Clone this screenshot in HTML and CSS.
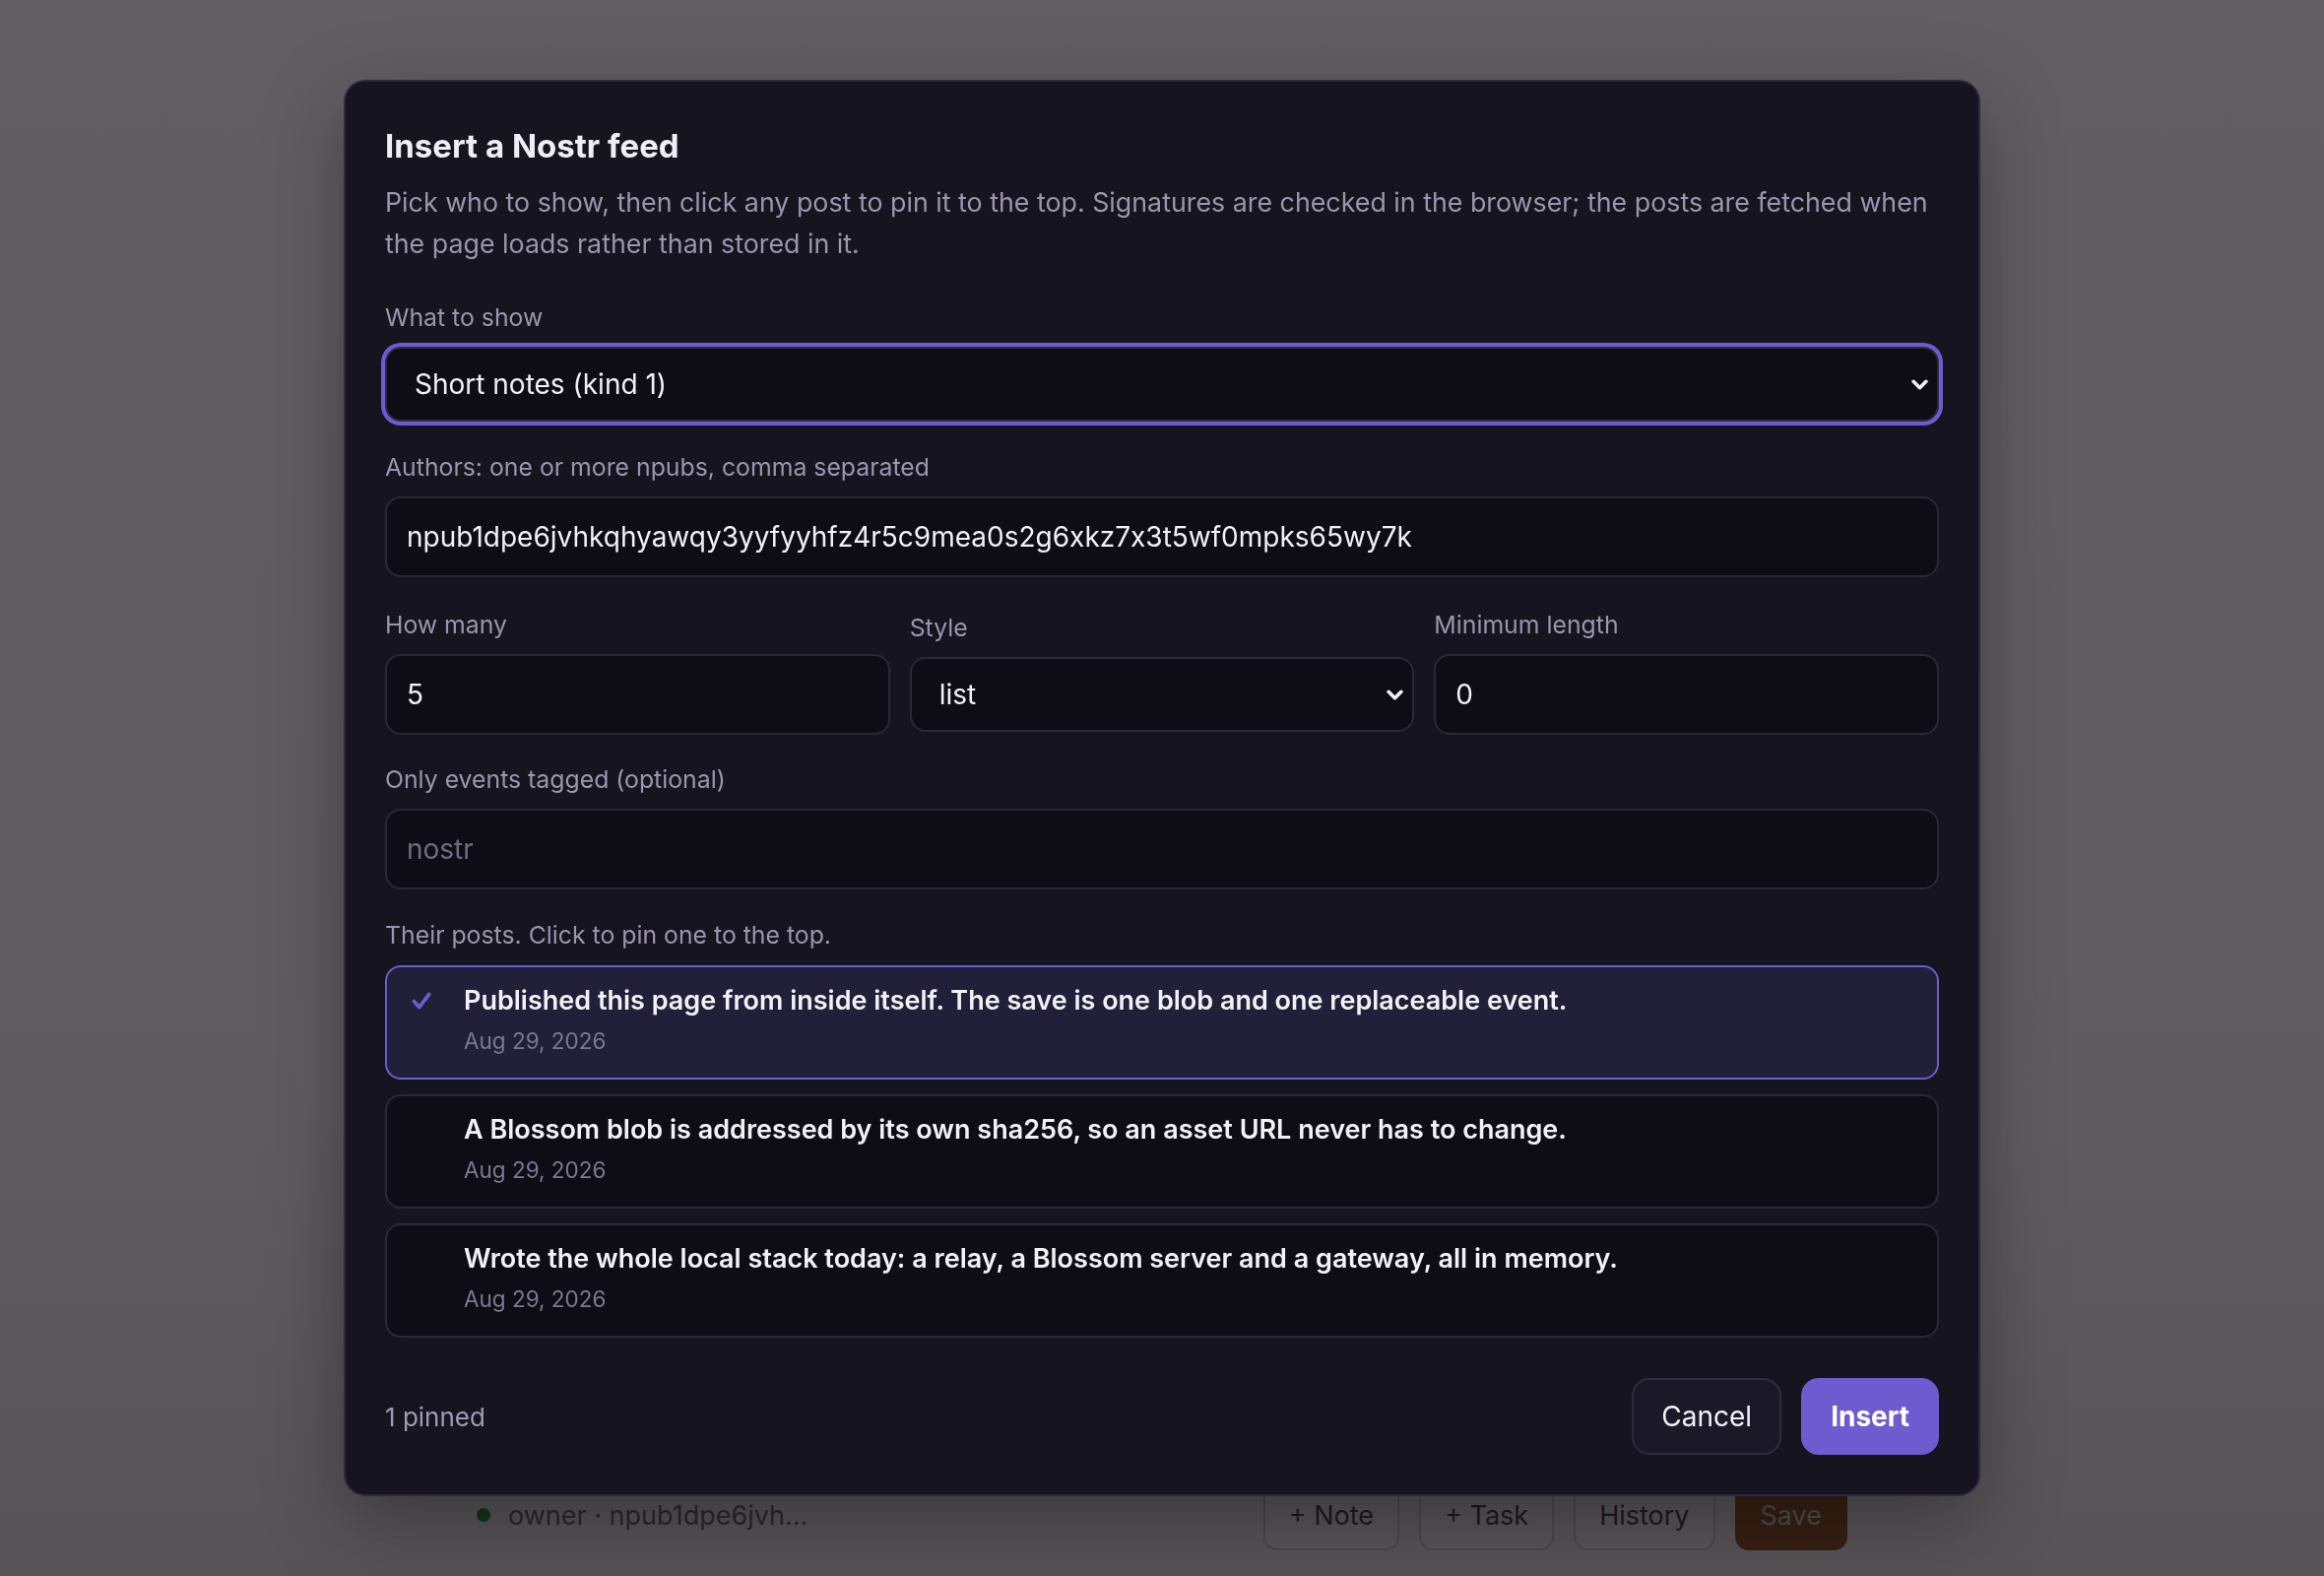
FILE: index.html
```html
<!DOCTYPE html>
<html lang="en">
<head>
    <meta charset="UTF-8">
    <meta name="viewport" content="width=device-width, initial-scale=1.0">
    <title>Insert a Nostr feed</title>
    <link rel="stylesheet" href="styles.css">
</head>
<body>

    <div class="page">
        <div class="statusbar">
            <div class="owner"><span class="dot"></span>owner · npub1dpe6jvh...</div>
            <div class="actions">
                <button>+ Note</button>
                <button>+ Task</button>
                <button>History</button>
                <button class="save">Save</button>
            </div>
        </div>
    </div>

    <div class="overlay">
        <div class="modal">
            <h1>Insert a Nostr feed</h1>
            <p class="intro">Pick who to show, then click any post to pin it to the top. Signatures are checked in the browser; the posts are fetched when the page loads rather than stored in it.</p>

            <div class="field first">
                <label for="kind">What to show</label>
                <div class="select-wrap focused">
                    <select id="kind" class="control select">
                        <option>Short notes (kind 1)</option>
                        <option>Long-form articles (kind 30023)</option>
                    </select>
                    <svg class="chevron" viewBox="0 0 16 10"><path d="M2 2l6 6 6-6" fill="none" stroke="#f2f0f7" stroke-width="3.4" stroke-linecap="round" stroke-linejoin="round"/></svg>
                </div>
            </div>

            <div class="field">
                <label for="authors">Authors: one or more npubs, comma separated</label>
                <input id="authors" class="control" type="text" value="npub1dpe6jvhkqhyawqy3yyfyyhfz4r5c9mea0s2g6xkz7x3t5wf0mpks65wy7k">
            </div>

            <div class="row3">
                <div class="field">
                    <label for="limit">How many</label>
                    <input id="limit" class="control" type="text" value="5">
                </div>
                <div class="field">
                    <label for="style">Style</label>
                    <div class="select-wrap">
                        <select id="style" class="control select">
                            <option>list</option>
                            <option>cards</option>
                        </select>
                        <svg class="chevron" viewBox="0 0 16 10"><path d="M2 2l6 6 6-6" fill="none" stroke="#f2f0f7" stroke-width="3.4" stroke-linecap="round" stroke-linejoin="round"/></svg>
                    </div>
                </div>
                <div class="field">
                    <label for="minlen">Minimum length</label>
                    <input id="minlen" class="control" type="text" value="0">
                </div>
            </div>

            <div class="field">
                <label for="tag">Only events tagged (optional)</label>
                <input id="tag" class="control" type="text" placeholder="nostr">
            </div>

            <div class="field posts-field">
                <label class="posts-label">Their posts. Click to pin one to the top.</label>
                <div class="posts">
                    <div class="post pinned-post">
                        <span class="check">
                            <svg viewBox="0 0 20 18"><path d="M3 9.5l5 5.5 9-12" fill="none" stroke="#6c5ccf" stroke-width="3.4" stroke-linecap="round" stroke-linejoin="round"/></svg>
                        </span>
                        <div class="post-body">
                            <div class="post-text">Published this page from inside itself. The save is one blob and one replaceable event.</div>
                            <div class="post-date">Aug 29, 2026</div>
                        </div>
                    </div>
                    <div class="post">
                        <span class="check"></span>
                        <div class="post-body">
                            <div class="post-text">A Blossom blob is addressed by its own sha256, so an asset URL never has to change.</div>
                            <div class="post-date">Aug 29, 2026</div>
                        </div>
                    </div>
                    <div class="post">
                        <span class="check"></span>
                        <div class="post-body">
                            <div class="post-text">Wrote the whole local stack today: a relay, a Blossom server and a gateway, all in memory.</div>
                            <div class="post-date">Aug 29, 2026</div>
                        </div>
                    </div>
                </div>
            </div>

            <div class="footer">
                <span class="pinned">1 pinned</span>
                <div class="buttons">
                    <button class="btn btn-cancel">Cancel</button>
                    <button class="btn btn-insert">Insert</button>
                </div>
            </div>
        </div>
    </div>

</body>
</html>
```

FILE: styles.css
```css
* {
    box-sizing: border-box;
}

html, body {
    margin: 0;
    height: 100%;
}

body {
    font-family: Inter, "Noto Sans", sans-serif;
    font-feature-settings: "calt" 0;
    background: linear-gradient(to bottom, #f5f3f5 0%, #eeecee 70%, #d4d2d4 100%);
}

/* app underneath the dialog */
.page {
    height: 100vh;
    display: flex;
    flex-direction: column;
    justify-content: flex-end;
    padding-bottom: 26px;
}

.statusbar {
    width: 1392px;
    margin: 0 auto;
    display: flex;
    justify-content: space-between;
    align-items: center;
}

.owner {
    display: flex;
    align-items: center;
    gap: 18px;
    font-size: 27px;
    color: #565556;
}

.dot {
    width: 14px;
    height: 14px;
    border-radius: 50%;
    background-color: #1a7a2a;
}

.actions {
    display: flex;
    gap: 20px;
}

.actions button {
    height: 72px;
    padding: 0 24px;
    font-family: inherit;
    font-size: 27px;
    color: #313131;
    background-color: #dad8da;
    border: 2px solid #b4b2b4;
    border-radius: 14px;
}

.actions .save {
    background-color: #7a4010;
    border-color: #7a4010;
    color: #bbbbbb;
}

/* dialog */
.overlay {
    position: fixed;
    inset: 0;
    background-color: rgba(20, 16, 22, 0.653);
    display: flex;
    align-items: center;
    justify-content: center;
}

.modal {
    width: 1662px;
    padding: 42px 40px 40px;
    background-color: #16141f;
    border: 2px solid #2d2a40;
    border-radius: 22px;
    box-shadow: 0 24px 80px rgba(0, 0, 0, 0.35);
}

h1 {
    margin: 0;
    font-size: 33px;
    line-height: 46px;
    font-weight: 700;
    color: #efedf7;
}

.intro {
    margin: 13px 0 0;
    font-size: 26.8px;
    line-height: 42px;
    color: #9b95ad;
}

.field {
    margin-top: 28px;
}

.field.first {
    margin-top: 36px;
}

.field label {
    display: block;
    font-size: 24.8px;
    line-height: 36px;
    color: #9b95ad;
    margin-bottom: 12px;
}

.control {
    display: block;
    width: 100%;
    height: 82px;
    padding: 0 20px;
    font-family: inherit;
    font-size: 28px;
    font-feature-settings: "calt" 0;
    color: #f2f0f7;
    background-color: #0e0d15;
    border: 2px solid #2a2837;
    border-radius: 16px;
    outline: none;
}

.control::placeholder {
    color: #6f6b80;
}

.select-wrap {
    position: relative;
}

.select {
    appearance: none;
    -webkit-appearance: none;
    height: 76px;
    padding-left: 28px;
}

.select-wrap.focused .select {
    border-color: #2e2b3e;
    box-shadow: 0 0 0 4px #6c5ccf;
}

.chevron {
    position: absolute;
    right: 11px;
    top: 50%;
    width: 17px;
    height: 11px;
    margin-top: -5px;
    pointer-events: none;
}

.row3 {
    display: grid;
    grid-template-columns: repeat(3, 1fr);
    gap: 20px;
    align-items: center;
    margin-top: 30px;
}

.row3 .field {
    margin-top: 0;
}

.row3 + .field {
    margin-top: 27px;
}

.field.posts-field {
    margin-top: 28px;
}

.field label.posts-label {
    margin-bottom: 13px;
}

.posts {
    display: flex;
    flex-direction: column;
    gap: 15px;
}

.post {
    display: flex;
    align-items: flex-start;
    gap: 30px;
    height: 116px;
    padding: 16px 22px 0;
    background-color: #0e0d15;
    border: 2px solid #2a2837;
    border-radius: 16px;
    cursor: pointer;
}

.post.pinned-post {
    background-color: #221f38;
    border-color: #6c5ccf;
}

.check {
    flex: 0 0 26px;
    height: 36px;
    display: flex;
    align-items: center;
    justify-content: center;
}

.check svg {
    width: 22px;
    height: 20px;
}

.post-text {
    font-size: 27px;
    line-height: 36px;
    font-weight: 600;
    color: #f3f1f8;
}

.post-date {
    margin-top: 8px;
    font-size: 22.5px;
    line-height: 30px;
    color: #7d7891;
}

.footer {
    display: flex;
    justify-content: space-between;
    align-items: center;
    margin-top: 41px;
}

.pinned {
    font-size: 26px;
    color: #a09bb4;
}

.buttons {
    display: flex;
    gap: 20px;
}

.btn {
    height: 78px;
    padding: 0 28px;
    font-family: inherit;
    font-size: 28px;
    border-radius: 18px;
    cursor: pointer;
}

.btn-cancel {
    background-color: #1b1927;
    border: 2px solid #2e2b3e;
    color: #f2f0f7;
}

.btn-insert {
    background-color: #6e5bd0;
    border: 2px solid #6e5bd0;
    color: #ffffff;
    font-weight: 700;
}
```
